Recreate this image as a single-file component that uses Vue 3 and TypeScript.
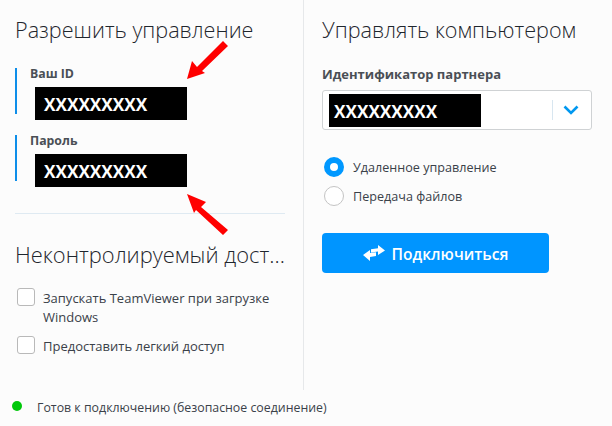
<script setup lang="ts">
const credentials = [
  { label: 'Ваш ID', value: 'XXXXXXXXX' },
  { label: 'Пароль', value: 'XXXXXXXXX' },
]
</script>

<template>
  <div class="app">
    <main class="main">
      <section class="left">
        <h1 class="title">Разрешить управление</h1>
        <div class="creds">
          <div v-for="c in credentials" :key="c.label" class="cred">
            <div class="cred-label">{{ c.label }}</div>
            <div class="mask cred-value">{{ c.value }}</div>
          </div>
        </div>
        <div class="rule"></div>
        <h1 class="title title-2">Неконтролируемый дост...</h1>
        <label class="check">
          <span class="box"></span>
          <span class="check-text">Запускать TeamViewer при загрузке Windows</span>
        </label>
        <label class="check check-2">
          <span class="box"></span>
          <span class="check-text">Предоставить легкий доступ</span>
        </label>
      </section>
      <section class="right">
        <h1 class="title">Управлять компьютером</h1>
        <div class="partner-label">Идентификатор партнера</div>
        <div class="combo">
          <div class="mask combo-value">XXXXXXXXX</div>
          <div class="combo-sep"></div>
          <svg class="chev" width="16" height="10" viewBox="0 0 16 10">
            <path d="M1.5 1.5 8 8l6.5-6.5" fill="none" stroke="#0098f0" stroke-width="2.6" />
          </svg>
        </div>
        <div class="radio">
          <span class="dot on"></span>
          <span class="radio-text">Удаленное управление</span>
        </div>
        <div class="radio radio-2">
          <span class="dot"></span>
          <span class="radio-text">Передача файлов</span>
        </div>
        <button class="connect" type="button">
          <svg width="22" height="16" viewBox="0 0 22 16">
            <path d="M0 10 7 5V8L13 7.2V11L7 12V16Z M22 5.5 15 0V3.2L8 4.2V7.4L15 6.5V10Z" fill="#fff" />
          </svg>
          <span class="connect-text">Подключиться</span>
        </button>
      </section>
    </main>
    <footer class="status">
      <span class="led"></span>
      <span>Готов к подключению (безопасное соединение)</span>
    </footer>
    <svg class="arrow arrow-1" width="42" height="42" viewBox="0 0 42 42">
      <path d="M0 39 5 21 10 27 36 1 41 6 15 31 18 33Z" fill="#ff0000" />
    </svg>
    <svg class="arrow arrow-2" width="42" height="42" viewBox="0 0 42 42">
      <path d="M0 0 19 8 14 13 41 36 36 41 9 16 7 19Z" fill="#ff0000" />
    </svg>
  </div>
</template>

<style>
html, body { margin: 0; background: #fcfcfc; }
</style>

<style scoped>
.app {
  position: relative;
  width: 612px;
  height: 426px;
  overflow: hidden;
  background: #fcfcfc;
  font-family: "Open Sans", "Noto Sans", sans-serif;
  font-size: 12.6px;
  color: #3a4149;
}
.main { display: flex; height: 390px; }
.left {
  box-sizing: border-box;
  width: 304px;
  height: 390px;
  padding: 16px 18px 0 15px;
  border-right: 1px solid #e6e8ea;
}
.right { flex: 1; padding: 16px 0 0 18px; box-sizing: border-box; }
.title {
  margin: 0;
  font-size: 21.6px;
  line-height: 28px;
  font-weight: 300;
  color: #1f262d;
  white-space: nowrap;
}
.creds { display: flex; flex-direction: column; gap: 21px; margin-top: 24px; }
.cred {
  height: 46px;
  border-left: 2px solid #0e8ee9;
  padding-left: 13px;
}
.cred-label { font-size: 12.3px; font-weight: 700; line-height: 12px; color: #4a4f55; }
.mask {
  box-sizing: border-box;
  flex: none;
  width: 152px;
  height: 33px;
  background: #000;
  color: #fff;
  font-size: 17.2px;
  font-weight: 700;
  line-height: 36px;
  padding-left: 9px;
  white-space: nowrap;
}
.cred-value { margin: 7px 0 0 5px; }
.combo-value { padding-left: 5px; }
.rule { height: 1px; background: #dfeaf2; margin-top: 32px; }
.title-2 { margin-top: 27px; font-size: 21.9px; }
.check { display: flex; gap: 8px; line-height: 19px; margin-top: 19px; font-size: 13px; }
.check-2 { margin-top: 9px; }
.check-text { padding-top: 1px; }
.box {
  flex: none;
  box-sizing: border-box;
  width: 18px;
  height: 18px;
  margin: 0 0 0 2px;
  background: #fff;
  border: 1px solid #b9b9b9;
  border-radius: 3px;
}
.partner-label { margin-top: 22px; font-size: 13px; font-weight: 700; line-height: 16px; color: #4a4f55; }
.combo {
  box-sizing: border-box;
  width: 270px;
  height: 40px;
  margin-top: 8px;
  background: #fff;
  border: 1px solid #cfd2d4;
  border-radius: 3px;
  display: flex;
  align-items: center;
  padding-left: 6px;
}
.combo-sep { width: 1px; height: 20px; background: #d8e6f0; margin-left: 71px; }
.chev { margin-left: 10px; }
.radio { display: flex; align-items: center; gap: 9px; margin: 27px 0 0 2px; line-height: 20px; }
.radio-2 { margin-top: 9px; }
.radio-text { position: relative; top: 1px; }
.dot {
  box-sizing: border-box;
  width: 20px;
  height: 20px;
  border-radius: 50%;
  background: #fff;
  border: 1px solid #c4c4c4;
}
.dot.on { border: 6px solid #0098ff; }
.connect {
  box-sizing: border-box;
  width: 227px;
  height: 40px;
  margin-top: 27px;
  display: flex;
  align-items: center;
  justify-content: center;
  gap: 7px;
  border: none;
  border-radius: 4px;
  background: #0095ff;
  color: #fff;
  font-family: inherit;
  font-size: 15.6px;
  font-weight: 600;
  padding: 0;
}
.connect-text { position: relative; top: 1px; }
.status {
  box-sizing: border-box;
  height: 36px;
  display: flex;
  align-items: center;
  gap: 15px;
  padding: 0 0 2px 12px;
  font-size: 12.35px;
}
.led { width: 10px; height: 10px; border-radius: 50%; background: #00c80a; margin-top: -3px; }
.arrow { position: absolute; }
.arrow-1 { left: 187px; top: 40px; }
.arrow-2 { left: 187px; top: 194px; }
</style>
